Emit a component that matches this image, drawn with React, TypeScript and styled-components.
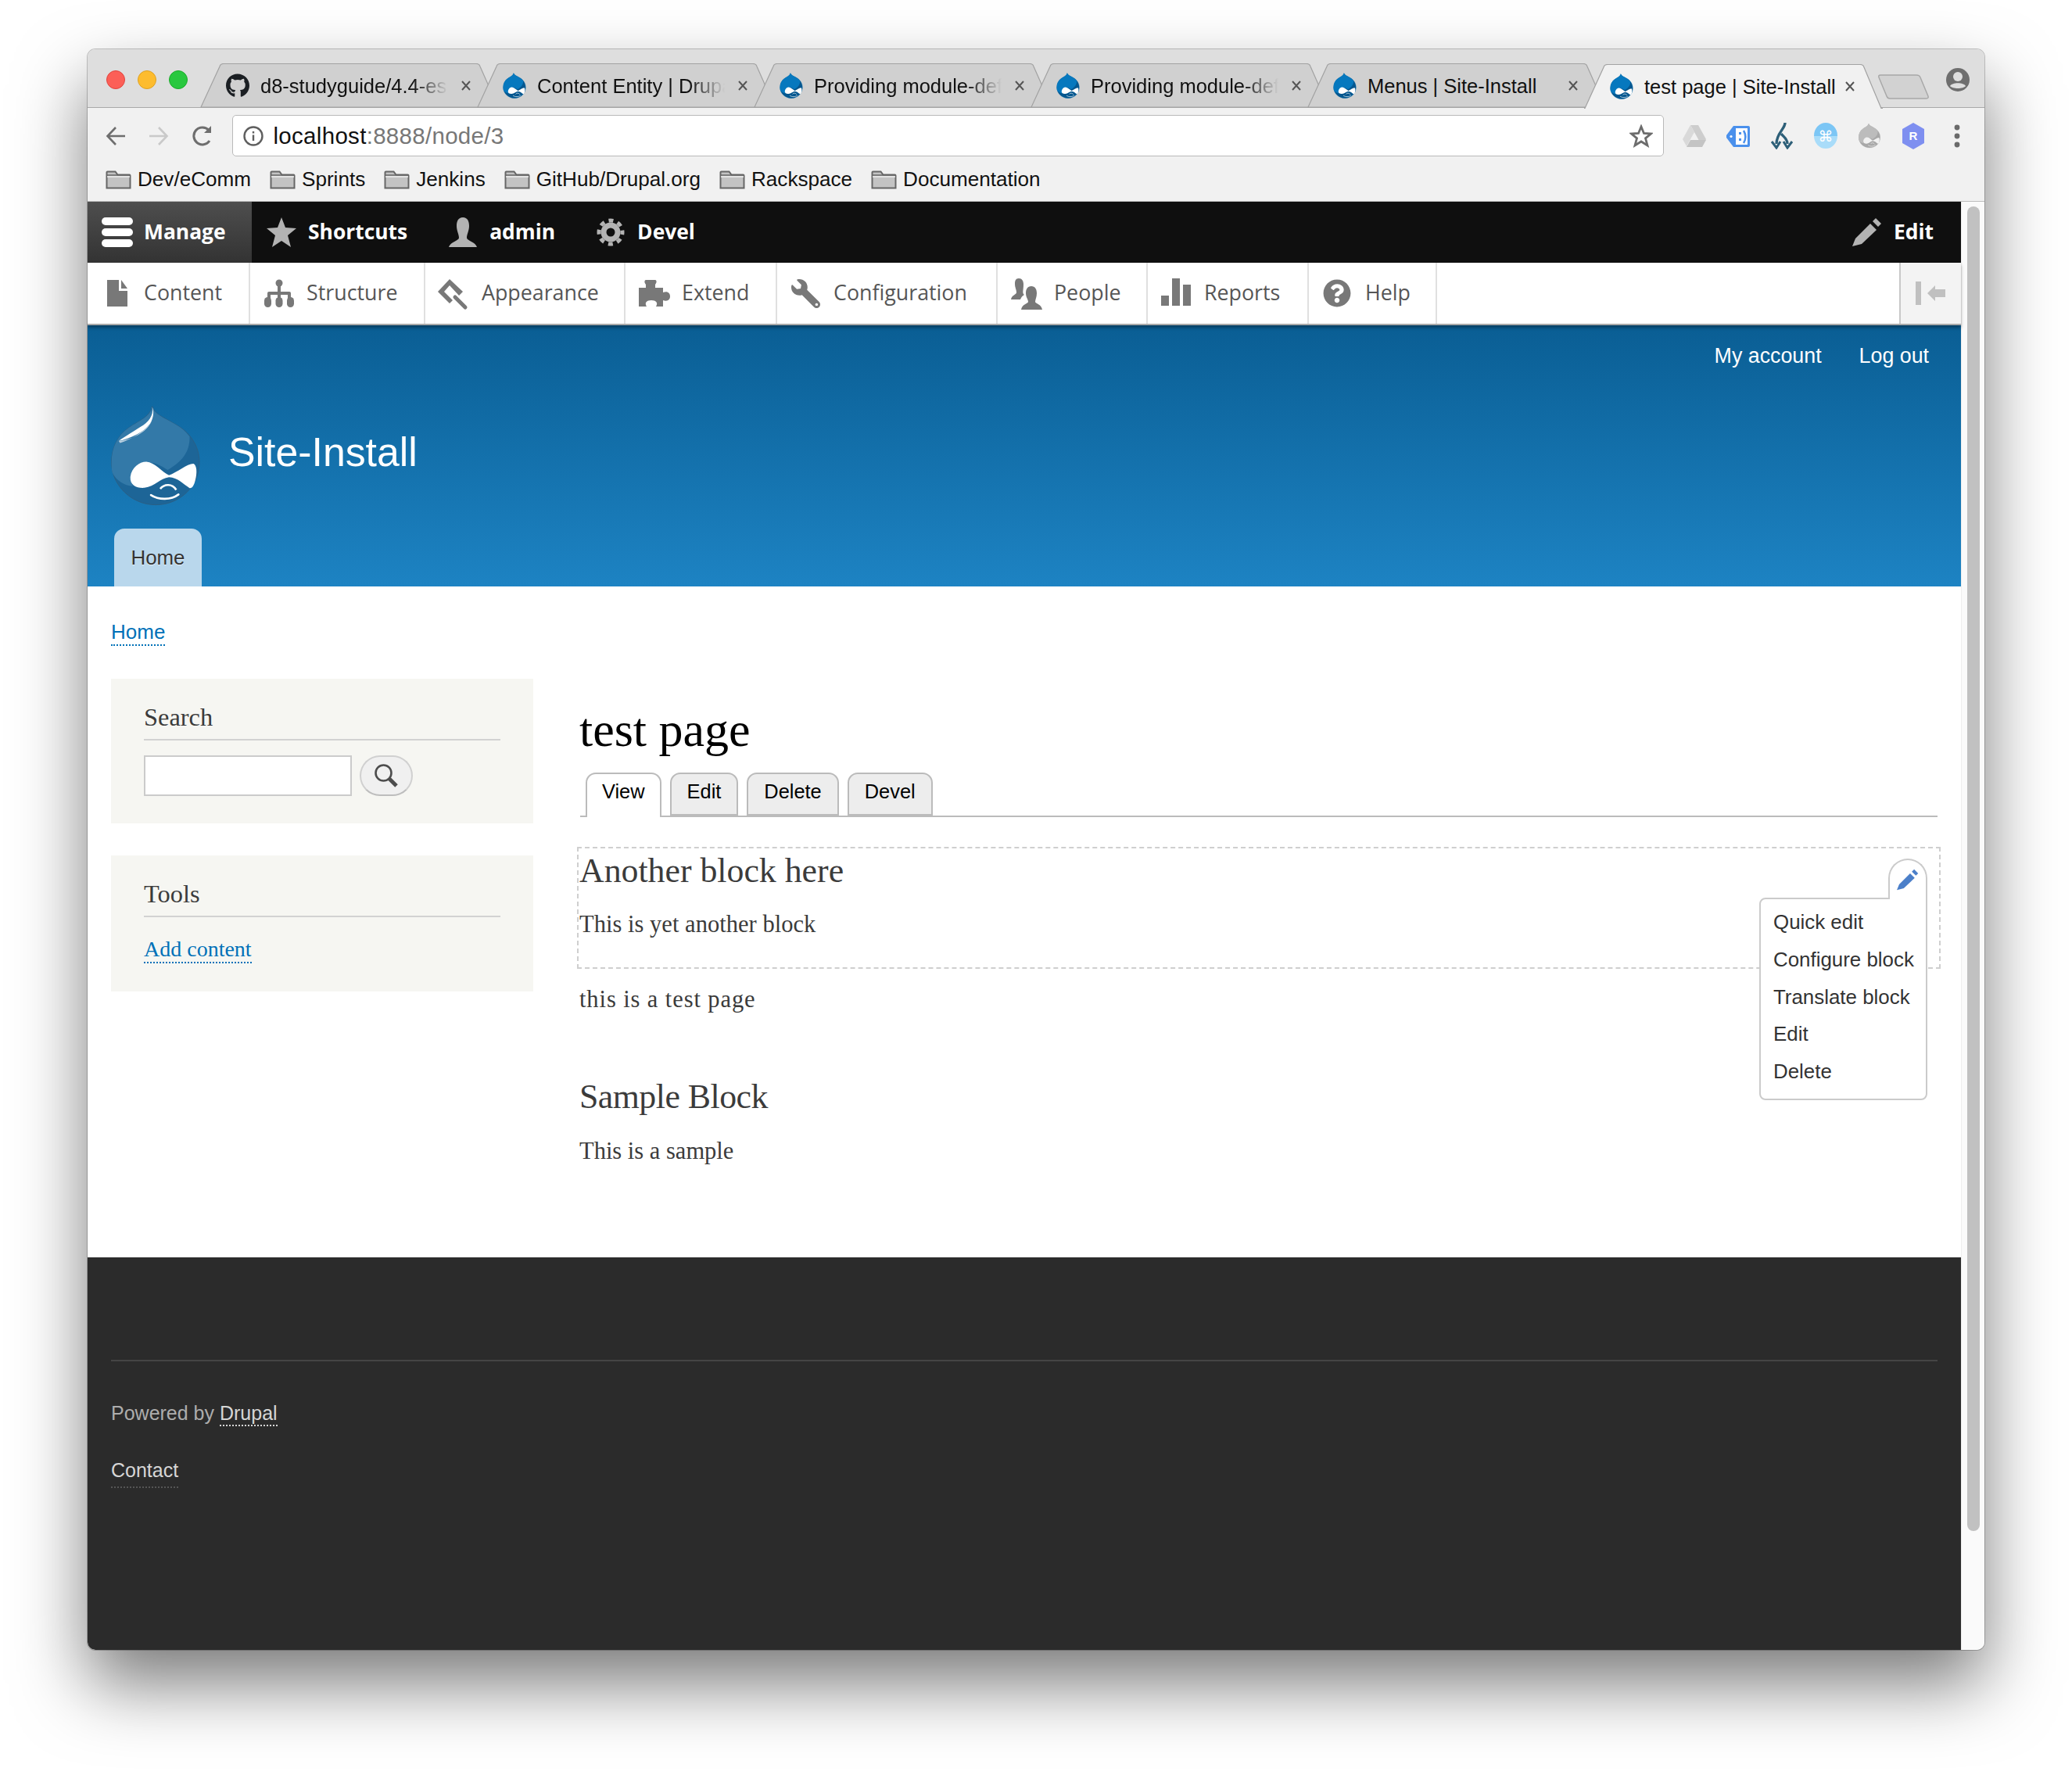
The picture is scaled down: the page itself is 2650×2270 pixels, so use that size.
import React from "react";
import styled, { createGlobalStyle } from "styled-components";
import { FaGithub, FaWrench, FaQuestionCircle } from "react-icons/fa";

const Global = createGlobalStyle`
  html, body { margin: 0; padding: 0; background: #fff; }
  * { box-sizing: border-box; }
  #root { width: 2650px; height: 2270px; overflow: hidden; }
`;

const SANS = `"Liberation Sans", Arial, sans-serif`;
const SERIF = `"Liberation Serif", "Times New Roman", serif`;
const UI = `"Open Sans", "Noto Sans", sans-serif`;

const Page = styled.div`
  width: 2650px; height: 2270px; padding: 63px 112px 160px; background: #fff; font-family: ${SANS};
`;
const Win = styled.div`
  width: 2426px; height: 2047px; display: flex; flex-direction: column; border-radius: 10px; overflow: hidden;
  box-shadow: 0 0 0 1px rgba(0,0,0,.22);
`;
const Shadow = styled.div`
  width: 2426px; height: 2047px; border-radius: 10px; box-shadow: 0 44px 90px rgba(0,0,0,.52);
`;
const TabStrip = styled.div`
  height: 75px; flex: none; display: flex; align-items: flex-end; background: #dedede; border-bottom: 1px solid #a9a9a9; position: relative;
`;
const Lights = styled.div`
  width: 144px; height: 74px; flex: none; display: flex; gap: 16px; padding: 27px 0 0 24px;
`;
const Light = styled.span<{ $c: string; $b: string }>`
  width: 24px; height: 24px; border-radius: 50%; background: ${p => p.$c}; border: 1px solid ${p => p.$b};
`;
const Tab = styled.div<{ $active?: boolean }>`
  position: relative; width: 382px; height: 56px; flex: none; margin-right: -28px; margin-bottom: ${p => (p.$active ? "-1px" : "0")};
  z-index: ${p => (p.$active ? 2 : 1)}; display: flex; align-items: center; padding: 0 0 0 33px;
  font-size: 25.5px; color: #111; white-space: nowrap;
`;
const TabShape = styled.svg`
  position: absolute; left: 0; top: 0; width: 382px; height: 57px;
`;
const FavSlot = styled.span`
  position: relative; width: 30px; height: 33px; margin-right: 14px; flex: none; display: flex; align-items: center; justify-content: center; color: #1b1f23;
`;
const TabTitle = styled.span<{ $fade?: boolean }>`
  position: relative; width: 250px; margin-top: 2px; overflow: visible; flex: none;
  ${p => (p.$fade ? "-webkit-mask-image: linear-gradient(to right,#000 78%,transparent 96%); mask-image: linear-gradient(to right,#000 78%,transparent 96%);" : "")}
`;
const CloseIcon = styled.svg`
  position: relative; width: 14px; height: 13px; margin-left: 6px; flex: none;
`;
const NewTab = styled.svg`
  position: relative; width: 68px; height: 34px; flex: none; margin: 0 0 9px 21px; align-self: flex-end;
`;
const Profile = styled.svg`
  position: absolute; right: 19px; top: 24px; width: 30px; height: 30px;
`;
const Toolbar = styled.div`
  height: 71px; flex: none; background: #f1f1f1; display: flex; align-items: flex-start; padding: 9px 7px 0 8px;
`;
const NavBtn = styled.span`
  width: 55.5px; height: 53px; flex: none; display: flex; align-items: center; justify-content: center;
`;
const Omni = styled.div`
  flex: 1; height: 53px; margin: 0 11px 0 10px; background: #fff; border: 1px solid #b9b9b9; border-radius: 5px; display: flex; align-items: center;
  padding: 0 13px 0 13px; font-size: 29.5px; color: #111;
`;
const Url = styled.span`
  margin-left: 13px; flex: 1; letter-spacing: .3px;
  & > em { font-style: normal; color: #777; }
`;
const ExtSlot = styled.span`
  width: 56px; height: 53px; flex: none; display: flex; align-items: center; justify-content: center;
`;
const CmdBadge = styled.span`
  width: 30px; height: 33px; border-radius: 50%; background: linear-gradient(#7cc6f5 50%, #a9dcf9 50%); color: #fff; font-family: "DejaVu Sans", sans-serif; font-size: 19px; display: flex; align-items: center; justify-content: center;
`;
const Bookmarks = styled.div`
  height: 49px; flex: none; background: #f1f1f1; border-bottom: 1px solid #bcbcbc; display: flex; gap: 24px; align-items: center; padding: 0 0 7px 23px; font-size: 26.1px; color: #111;
`;
const Bookmark = styled.span`
  display: flex; align-items: center; gap: 8px;
`;
const Body = styled.div`
  flex: 1; display: flex; min-height: 0;
`;
const Viewport = styled.div`
  flex: 1; display: flex; flex-direction: column; min-width: 0; background: #fff;
`;
const Scrollbar = styled.div`
  width: 30px; flex: none; background: #fafafa; border-left: 1px solid #eee; padding: 6px 0 0 7px;
`;
const Thumb = styled.div`
  width: 16px; height: 1694px; border-radius: 8px; background: #c1c1c1;
`;
const AdminBar = styled.div`
  height: 78px; flex: none; background: #0f0f0f; display: flex; font-family: ${UI}; font-weight: 700; font-size: 26.4px; color: #fff;
`;
const ManageItem = styled.div`
  width: 210px; height: 78px; display: flex; align-items: center; gap: 14px; padding: 0 0 0 18px; background: linear-gradient(#4e4e4e, #333);
  & > span { margin-top: -3px; }
`;
const AdminItem = styled.div<{ $right?: boolean }>`
  height: 78px; display: flex; align-items: center; gap: 15px; padding: ${p => (p.$right ? "0 35px 0 0" : "0 33px 0 19px")}; ${p => (p.$right ? "margin-left: auto;" : "")}
  & > span { margin-top: -3px; }
`;
const AdminIcon = styled.svg`
  width: 38px; height: 38px; flex: none; fill: #b3b3b3;
`;
const Tray = styled.div`
  height: 80px; flex: none; background: #fff; border-bottom: 2px solid #a9a9a9; display: flex; font-family: ${UI}; font-size: 26.8px; color: #565656; position: relative; box-shadow: 0 3px 4px rgba(0,0,0,.35); z-index: 2;
`;
const TrayItem = styled.div<{ $w: number }>`
  width: ${p => p.$w}px; flex: none; height: 78px; border-right: 2px solid #e0e0e0; display: flex; align-items: center; gap: 16px; padding-left: 16px;
  & > span:last-child { margin-top: -3px; }
`;
const TrayIconBox = styled.div`
  width: 40px; height: 40px; flex: none; display: flex; align-items: center; justify-content: center; color: #787878; overflow: visible;
`;
const TraySvg = styled.svg`
  width: 40px; height: 40px; fill: #787878; overflow: visible; flex: none;
`;
const FlippedWrench = styled(FaWrench)`
  transform: scaleX(-1);
`;
const Toggle = styled.div`
  margin-left: auto; width: 79px; height: 78px; background: #f3f3f3; border-left: 2px solid #c8c8c8; display: flex; align-items: center; padding-left: 19px;
`;
const Header = styled.div`
  height: 334px; flex: none; background: linear-gradient(#0a5e94, #1d83c3); display: flex; flex-direction: column; padding: 24px 41px 0 30px; color: #fff;
`;
const Secondary = styled.div`
  display: flex; justify-content: flex-end; gap: 48px; font-size: 26.8px; line-height: 30px; height: 30px;
`;
const Branding = styled.div`
  display: flex; gap: 36px; margin-top: 48px; height: 129px;
`;
const SiteName = styled.div`
  font-size: 51.8px; line-height: 60px; margin-top: 30px;
`;
const HomeTab = styled.div`
  width: 112px; height: 74px; margin: 29px 0 0 4px; background: #b9d7ec; border-radius: 13px 13px 0 0; color: #333; font-size: 25.9px; display: flex; align-items: center; justify-content: center; text-shadow: 0 1px 0 #e4eff7;
`;
const Main = styled.div`
  flex: 1; min-height: 0; padding: 0 30px; background: #fff; color: #3b3b3b;
`;
const Crumb = styled.div`
  margin-top: 43px; height: 34px; line-height: 30px; font-size: 26px;
`;
const Link = styled.a<{ $c?: string; $u?: string; $gap?: number }>`
  color: ${p => p.$c || "#0071b8"}; border-bottom: 2px dotted ${p => p.$u || "currentColor"}; text-decoration: none; padding-bottom: ${p => p.$gap ?? 1}px;
`;
const Columns = styled.div`
  display: flex; gap: 59px; margin-top: 41px;
`;
const Sidebar = styled.div`
  width: 540px; flex: none; display: flex; flex-direction: column; gap: 41px;
`;
const Card = styled.div<{ $h: number }>`
  height: ${p => p.$h}px; background: #f6f6f2; padding: 0 42px;
`;
const CardTitle = styled.h2`
  margin: 0; padding: 29px 0 8px; height: 79px; font: 400 32.4px/40px ${SERIF}; color: #3b3b3b; border-bottom: 2px solid #d2d2d2;
`;
const SearchRow = styled.div`
  display: flex; gap: 10px; margin-top: 19px;
`;
const SearchInput = styled.div`
  width: 266px; height: 52px; background: #fff; border: 2px solid #cbcbcb;
`;
const SearchBtn = styled.div`
  width: 68px; height: 52px; border-radius: 26px; background: #f0f0f0; border: 2px solid #d0d0d0; border-bottom-color: #bdbdbd; display: flex; align-items: center; justify-content: center;
`;
const CardLinkRow = styled.div`
  margin-top: 24px; font: 400 28px/34px ${SERIF};
`;
const Content = styled.div`
  flex: 1; min-width: 0;
`;
const Title = styled.h1`
  margin: 30px 0 0; height: 70px; font: 400 62px/70px ${SERIF}; color: #000;
`;
const Tabs = styled.div`
  margin: 20px 0 0 1px; height: 57px; display: flex; gap: 11px; padding-left: 7px; border-bottom: 2px solid #bbb; font-size: 25.4px; color: #000;
`;
const PageTab = styled.div<{ $active?: boolean }>`
  height: ${p => (p.$active ? "57px" : "55px")}; padding: 0 ${p => (p.$active ? "19px" : "20px")}; border: 2px solid #bbb; border-bottom: ${p => (p.$active ? "0" : "2px solid #bbb")}; border-radius: 13px 13px 0 0; background: ${p => (p.$active ? "#fff" : "#ededed")}; line-height: 44px; ${p => (p.$active ? "position: relative; z-index:1;" : "")}
`;
const BlockBox = styled.div`
  position: relative; margin: 38px -4px 0 -3px; height: 156px; padding: 0 0 0 1px; border: 2px dashed #cfcfcf;
`;
const BlockTitle = styled.h2<{ $top: number; $track: number }>`
  margin: ${p => p.$top}px 0 0; font: 400 43.8px/54px ${SERIF}; letter-spacing: ${p => p.$track}px; color: #3b3b3b;
`;
const Para = styled.p<{ $top: number; $track: number }>`
  margin: ${p => p.$top}px 0 0; font: 400 30.5px/44px ${SERIF}; letter-spacing: ${p => p.$track}px; color: #3b3b3b;
`;
const Trigger = styled.div`
  position: absolute; top: 13px; right: 15px; width: 50px; height: 52px; background: #fff; border: 2px solid #cbcbcb; border-bottom: 0; border-radius: 25px 25px 0 0; z-index: 3; display: flex; justify-content: center; padding-top: 11px;
`;
const Menu = styled.div`
  position: absolute; top: 63px; right: 15px; width: 215px; height: 259px; background: #fff; border: 2px solid #cbcbcb; border-radius: 8px 0 8px 8px; padding: 6px 0 0 16px; z-index: 2; font-size: 25.9px; color: #333;
`;
const MenuItem = styled.div`
  height: 47.8px; line-height: 47.8px; white-space: nowrap;
`;
const Footer = styled.div`
  height: 502px; flex: none; background: #2b2b2b; padding: 131px 30px 0; font-size: 25px; color: #adadad;
`;
const FooterRule = styled.div`
  height: 2px; background: #454545;
`;
const FooterLine = styled.div<{ $top: number }>`
  margin-top: ${p => p.$top}px; line-height: 30px; height: 30px;
`;
const Folder = () => (
  <svg width="33" height="24" viewBox="0 0 33 24">
    <path d="M1.5 22.5V2.5a1 1 0 0 1 1-1h10l3 4h15a1 1 0 0 1 1 1v16z" fill="#c3c3c3" stroke="#666" strokeWidth="2" />
    <path d="M2 6h29" stroke="#666" strokeWidth="1.5" />
    <path d="M2 8h29" stroke="#eee" strokeWidth="1.5" />
  </svg>
);

type DropProps = { w: number; h: number; light: string; dark: string; line: string; wing: string; streak?: boolean };
const Drop = ({ w, h, light, dark, line, wing, streak }: DropProps) => (
  <svg width={w} height={h} viewBox="125 113 346 391">
    <path d="M285 118C295 150 330 160 370 185C430 215 468 270 468 335C468 425 395 500 298 500C205 500 127 425 127 335C127 280 150 230 195 200C235 172 275 160 285 118Z" fill={dark} stroke={line} strokeWidth="3" />
    <path d="M285 120C295 150 330 160 370 185C395 198 415 215 430 235C432 300 395 335 345 365C310 340 270 325 240 345C205 365 195 400 210 428C175 425 145 405 130 375C127 360 127 345 127 335C127 280 150 230 195 200C235 172 275 160 285 120Z" fill={light} />
    <path d="M200 392C205 355 235 333 262 333C295 335 325 375 350 385C380 375 420 340 445 340C458 345 460 375 452 405C447 425 440 437 430 435C405 420 385 395 350 393C315 397 295 430 255 434C225 436 198 425 200 392Z" fill={wing} />
    <path d="M316 438C330 420 362 415 378 442" fill="none" stroke={wing} strokeWidth="8" />
    <path d="M280 462C310 482 358 482 387 460" fill="none" stroke={wing} strokeWidth="8" strokeLinecap="round" />
    {streak && <path d="M285 120C292 155 268 180 240 197C205 220 170 240 155 252C195 245 265 215 282 175C290 155 292 140 285 120Z" fill="#fff" />}
    {streak && <path d="M155 252C195 250 265 225 285 170C270 205 210 245 160 260Z" fill="#b9cfdf" />}
  </svg>
);
const Fav = () => <Drop w={30} h={33} light="#0678be" dark="#05578f" line="#0678be" wing="#fff" streak={false} />;

const Cross = () => (
  <CloseIcon viewBox="0 0 14 13"><path d="M2 1l10 11M12 1L2 12" stroke="#555" strokeWidth="2" fill="none" /></CloseIcon>
);

const tabData: { title: string; icon: "gh" | "dr"; fade: boolean; active?: boolean }[] = [
  { title: "d8-studyguide/4.4-es", icon: "gh", fade: true },
  { title: "Content Entity | Drupa", icon: "dr", fade: true },
  { title: "Providing module-def", icon: "dr", fade: true },
  { title: "Providing module-def", icon: "dr", fade: true },
  { title: "Menus | Site-Install", icon: "dr", fade: false },
  { title: "test page | Site-Install", icon: "dr", fade: false, active: true },
];

const ICONS = {
  star: <polygon points="19,0 24,13 38,14 27,23 31,38 19,30 7,38 11,23 0,14 14,13" />,
  user: <path d="M19 0C13 0 11 5 11 11C11 17 14 22 14 26C14 30 3 31 1 38H37C35 31 24 30 24 26C24 22 27 17 27 11C27 5 25 0 19 0Z" />,
  gear: (
    <g fill="none" stroke="#b3b3b3">
      <circle cx="19" cy="19" r="9" strokeWidth="7" />
      <circle cx="19" cy="19" r="15" strokeWidth="5" strokeDasharray="6 5.78" strokeDashoffset="3" />
    </g>
  ),
  pencil: (
    <g>
      <polygon points="0,37 4,27 23,8 31,16 12,34" />
      <polygon points="26,5 30,1 37,8 33,12" />
    </g>
  ),
};

const trayItems: { label: string; w: number; icon: React.ReactNode }[] = [
  { label: "Content", w: 208, icon: <TraySvg viewBox="0 0 40 40"><path d="M9 3H24V17H35V37H9Z" /><path d="M27 3L35 14H27Z" /></TraySvg> },
  { label: "Structure", w: 224, icon: <TraySvg viewBox="0 0 40 40"><circle cx="21" cy="7" r="4.5" /><rect x="19" y="8" width="4" height="14" /><path d="M6 28V20a2 2 0 0 1 2-2H34a2 2 0 0 1 2 2V28H32V22H23V28H19V22H10V28Z" /><rect x="2" y="25" width="9" height="13" rx="4.5" /><rect x="16.5" y="25" width="9" height="13" rx="4.5" /><rect x="31" y="25" width="9" height="13" rx="4.5" /></TraySvg> },
  { label: "Appearance", w: 256, icon: <TraySvg viewBox="0 0 40 40"><polygon points="15,2 0,18 15,33 19,29 8,18 15,10 27,23 32,18" /><path d="M22 25L35 38" stroke="#787878" strokeWidth="5" strokeLinecap="round" /></TraySvg> },
  { label: "Extend", w: 194, icon: <TraySvg viewBox="0 0 40 40"><path d="M1 13H10V9C7 5 9 3 10 3H22C23 3 25 5 22 9V13H32V19C38 17 41 20 41 24C41 28 38 31 32 29V37H23C26 32 23 29 17 29C11 29 8 32 11 37H1Z" /></TraySvg> },
  { label: "Configuration", w: 282, icon: <FlippedWrench size={37} /> },
  { label: "People", w: 192, icon: <TraySvg viewBox="0 0 40 40"><path d="M11 1C7 1 6 4 6 8C6 13 8 15 8 19C8 22 2 22 1 28H13C14 25 16 23 18 22C15 20 17 16 17 9C17 4 15 1 11 1Z" /><path d="M27 11C22 11 20 15 20 20C20 25 23 28 23 31C23 33 15 34 14 41H41C40 34 32 33 32 31C32 28 34 25 34 20C34 15 32 11 27 11Z" /></TraySvg> },
  { label: "Reports", w: 206, icon: <TraySvg viewBox="0 0 40 40"><rect x="1" y="23" width="10" height="13" /><rect x="15" y="1" width="10" height="35" /><rect x="29" y="9" width="10" height="27" /></TraySvg> },
  { label: "Help", w: 164, icon: <FaQuestionCircle size={36} /> },
];

export default function App() {
  return (
    <Page>
      <Global />
      <Shadow>
        <Win>
          <TabStrip>
            <Lights>
              <Light $c="#fc5f57" $b="#e0443e" />
              <Light $c="#fdbc2e" $b="#dea123" />
              <Light $c="#29c83f" $b="#1aab29" />
            </Lights>
            {tabData.map((t, i) => (
              <Tab key={i} $active={t.active}>
                <TabShape viewBox="0 0 382 57">
                  <path d={t.active ? "M0 56.5H1L25 4Q26 0.5 30 0.5H353Q357 0.5 358 4L380 56.5H382" : "M1 56L25 4Q26 0.5 30 0.5H353Q357 0.5 358 4L381 56Z"} fill={t.active ? "#f1f1f1" : "#d0d0d0"} stroke="#a2a2a2" strokeWidth="1.2" />
                </TabShape>
                <FavSlot>{t.icon === "gh" ? <FaGithub size={31} /> : <Fav />}</FavSlot>
                <TabTitle $fade={t.fade}>{t.title}</TabTitle>
                <Cross />
              </Tab>
            ))}
            <NewTab viewBox="0 0 68 34">
              <path d="M4 2H50Q54 2 55 5L65 29Q66 32 62 32H16Q13 32 12 29L2 5Q1 2 4 2Z" fill="#d2d2d2" stroke="#a8a8a8" strokeWidth="1.5" />
            </NewTab>
            <Profile viewBox="0 0 30 30">
              <circle cx="15" cy="15" r="15" fill="#6e6e6e" />
              <circle cx="15" cy="11" r="6" fill="#dedede" />
              <path d="M5 23C8 18 22 18 25 23C22 27 8 27 5 23Z" fill="#dedede" />
            </Profile>
          </TabStrip>
          <Toolbar>
            <NavBtn><svg width="26" height="26" viewBox="0 0 26 26" fill="none" stroke="#6e6e6e" strokeWidth="2.6"><path d="M25 13H3M13 2L2.5 13L13 24" /></svg></NavBtn>
            <NavBtn><svg width="26" height="26" viewBox="0 0 26 26" fill="none" stroke="#c9c9c9" strokeWidth="2.6"><path d="M1 13H23M13 2L23.5 13L13 24" /></svg></NavBtn>
            <NavBtn><svg width="28" height="28" viewBox="0 0 28 28" fill="none" stroke="#6e6e6e" strokeWidth="3"><path d="M23 20A11 11 0 1 1 22 6.5" /><path d="M25 1V10H16Z" fill="#6e6e6e" stroke="none" /></svg></NavBtn>
            <Omni>
              <svg width="26" height="26" viewBox="0 0 26 26" fill="none" stroke="#5f5f5f" strokeWidth="2.4"><circle cx="13" cy="13" r="11.5" /><path d="M13 11.5V19M13 7V9.5" /></svg>
              <Url>localhost<em>:8888/node/3</em></Url>
              <svg width="30" height="30" viewBox="0 0 30 30" fill="none" stroke="#6c6c6c" strokeWidth="2.8"><polygon points="15,3 18.5,11.5 27.5,12 20.5,17.8 23,27 15,22 7,27 9.5,17.8 2.5,12 11.5,11.5" /></svg>
            </Omni>
            <ExtSlot><svg width="32" height="30" viewBox="0 0 32 30"><polygon points="11,1 21,1 31,19 26,28 16,10" fill="#cdcdcd" /><polygon points="11,1 16,10 6,28 1,19" fill="#d9d9d9" /><polygon points="11,20 31,20 26,29 6,29" fill="#c4c4c4" /></svg></ExtSlot>
            <ExtSlot><svg width="32" height="30" viewBox="0 0 32 30"><path d="M10 2H29a2 2 0 0 1 2 2V27a2 2 0 0 1-2 2H10L1 17V14Z" fill="#4a90ec" /><rect x="13" y="5" width="15" height="21" fill="#fff" /><rect x="17" y="10" width="3" height="3" fill="#4a90ec" /><rect x="17" y="18" width="3" height="3" fill="#4a90ec" /><path d="M23 8C26 13 26 19 23 24" stroke="#4a90ec" strokeWidth="2.5" fill="none" /><circle cx="7" cy="15.5" r="1.6" fill="#fff" /></svg></ExtSlot>
            <ExtSlot><svg width="30" height="34" viewBox="0 0 30 34" fill="none" stroke="#2d5f78" strokeWidth="3.4"><path d="M19 0C19 8 8 13 8 27" /><path d="M14 14C17 18 22 20 22 27" /><path d="M2 24L8 32L13 24" strokeWidth="3" /><path d="M17 24L22 32L28 24" strokeWidth="3" /></svg></ExtSlot>
            <ExtSlot><CmdBadge>⌘</CmdBadge></ExtSlot>
            <ExtSlot><Drop w={28} h={33} light="#bcbcbc" dark="#a8a8a8" line="#b5b5b5" wing="#f1f1f1" /></ExtSlot>
            <ExtSlot><svg width="30" height="34" viewBox="0 0 30 34"><polygon points="15,0 29,8 29,26 15,34 1,26 1,8" fill="#7e8ff0" /><text x="15" y="22" fontSize="15" fontWeight="700" fill="#fff" textAnchor="middle" fontFamily="Liberation Sans, sans-serif">R</text></svg></ExtSlot>
            <ExtSlot><svg width="8" height="30" viewBox="0 0 8 30" fill="#6a6a6a"><circle cx="4" cy="4" r="3.4" /><circle cx="4" cy="15" r="3.4" /><circle cx="4" cy="26" r="3.4" /></svg></ExtSlot>
          </Toolbar>
          <Bookmarks>
            {["Dev/eComm", "Sprints", "Jenkins", "GitHub/Drupal.org", "Rackspace", "Documentation"].map(b => (
              <Bookmark key={b}><Folder />{b}</Bookmark>
            ))}
          </Bookmarks>
          <Body>
            <Viewport>
              <AdminBar>
                <ManageItem>
                  <svg width="40" height="38" viewBox="0 0 40 38" fill="#fff"><rect y="0" width="40" height="10" rx="5" /><rect y="14" width="40" height="10" rx="5" /><rect y="28" width="40" height="10" rx="5" /></svg>
                  <span>Manage</span>
                </ManageItem>
                <AdminItem><AdminIcon viewBox="0 0 38 38">{ICONS.star}</AdminIcon><span>Shortcuts</span></AdminItem>
                <AdminItem><AdminIcon viewBox="0 0 38 38">{ICONS.user}</AdminIcon><span>admin</span></AdminItem>
                <AdminItem><AdminIcon viewBox="0 0 38 38">{ICONS.gear}</AdminIcon><span>Devel</span></AdminItem>
                <AdminItem $right><AdminIcon viewBox="0 0 38 38">{ICONS.pencil}</AdminIcon><span>Edit</span></AdminItem>
              </AdminBar>
              <Tray>
                {trayItems.map(t => (
                  <TrayItem key={t.label} $w={t.w}>
                    <TrayIconBox>{t.icon}</TrayIconBox>
                    <span>{t.label}</span>
                  </TrayItem>
                ))}
                <Toggle>
                  <svg width="40" height="30" viewBox="0 0 40 30" fill="#c0c0c0"><rect x="0" y="0" width="7" height="30" /><path d="M15 15L25 5V10H38V20H25V25Z" /></svg>
                </Toggle>
              </Tray>
              <Header>
                <Secondary><span>My account</span><span>Log out</span></Secondary>
                <Branding>
                  <Drop w={114} h={129} light="#3379a8" dark="#1d6597" line="#2a5f85" wing="#fff" streak />
                  <SiteName>Site-Install</SiteName>
                </Branding>
                <HomeTab>Home</HomeTab>
              </Header>
              <Main>
                <Crumb><Link>Home</Link></Crumb>
                <Columns>
                  <Sidebar>
                    <Card $h={185}>
                      <CardTitle>Search</CardTitle>
                      <SearchRow>
                        <SearchInput />
                        <SearchBtn>
                          <svg width="32" height="32" viewBox="0 0 32 32" fill="none" stroke="#4d4d4d"><circle cx="12.5" cy="12.5" r="10" strokeWidth="2.6" /><path d="M20 20L29 29" strokeWidth="5" /></svg>
                        </SearchBtn>
                      </SearchRow>
                    </Card>
                    <Card $h={174}>
                      <CardTitle>Tools</CardTitle>
                      <CardLinkRow><Link>Add content</Link></CardLinkRow>
                    </Card>
                  </Sidebar>
                  <Content>
                    <Title>test page</Title>
                    <Tabs>
                      <PageTab $active>View</PageTab>
                      <PageTab>Edit</PageTab>
                      <PageTab>Delete</PageTab>
                      <PageTab>Devel</PageTab>
                    </Tabs>
                    <BlockBox>
                      <BlockTitle $top={1} $track={0}>Another block here</BlockTitle>
                      <Para $top={20} $track={0.03}>This is yet another block</Para>
                      <Trigger>
                        <svg width="28" height="28" viewBox="0 0 38 38" fill="#4b7fc9">{ICONS.pencil}</svg>
                      </Trigger>
                      <Menu>
                        {["Quick edit", "Configure block", "Translate block", "Edit", "Delete"].map(m => (
                          <MenuItem key={m}>{m}</MenuItem>
                        ))}
                      </Menu>
                    </BlockBox>
                    <Para $top={17} $track={0.9}>this is a test page</Para>
                    <BlockTitle $top={75} $track={-0.5}>Sample Block</BlockTitle>
                    <Para $top={21} $track={0}>This is a sample</Para>
                  </Content>
                </Columns>
              </Main>
              <Footer>
                <FooterRule />
                <FooterLine $top={51}>Powered by <Link $c="#d6d6d6">Drupal</Link></FooterLine>
                <FooterLine $top={43}><Link $c="#d6d6d6" $u="#555" $gap={7}>Contact</Link></FooterLine>
              </Footer>
            </Viewport>
            <Scrollbar><Thumb /></Scrollbar>
          </Body>
        </Win>
      </Shadow>
    </Page>
  );
}
